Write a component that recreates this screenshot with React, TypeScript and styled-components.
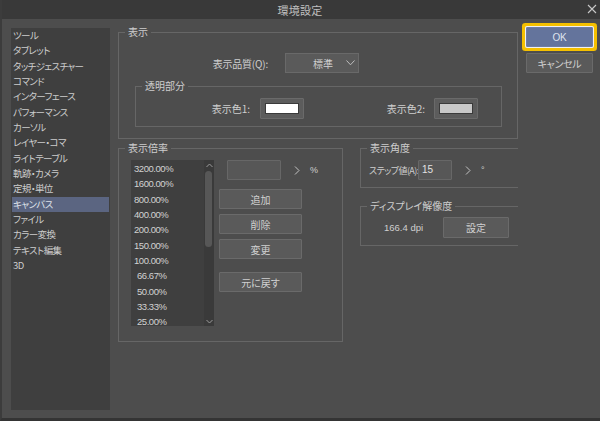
import styled, { createGlobalStyle } from 'styled-components';
import { useState } from 'react';

const GlobalStyle = createGlobalStyle`
	html, body {
		margin: 0;
		padding: 0;
		background: #4d4d4d;
	}
	* {
		box-sizing: border-box;
	}
	body {
		font-family: 'Noto Sans CJK JP', 'Noto Sans', sans-serif;
		font-feature-settings: 'palt';
		color: #cfcfcf;
	}
`;

const categories = [
	'ツール',
	'タブレット',
	'タッチジェスチャー',
	'コマンド',
	'インターフェース',
	'パフォーマンス',
	'カーソル',
	'レイヤー・コマ',
	'ライトテーブル',
	'軌跡・カメラ',
	'定規・単位',
	'キャンバス',
	'ファイル',
	'カラー変換',
	'テキスト編集',
	'3D',
];

const zoomRates = ['3200.00', '1600.00', '800.00', '400.00', '200.00', '150.00', '100.00', '66.67', '50.00', '33.33', '25.00'];

const App = () => {
	const [selected, setSelected] = useState('キャンバス');

	return (
		<>
			<GlobalStyle />
			<Window>
				<TitleBar>
					<Title>環境設定</Title>
					<CloseButton>
						<svg width="10" height="10" viewBox="0 0 10 10">
							<path d="M1 1 L9 9 M9 1 L1 9" stroke="#c8c8c8" strokeWidth="1.1" fill="none" />
						</svg>
					</CloseButton>
				</TitleBar>
				<Body>
					<Sidebar>
						{categories.map((name) => (
							<SidebarItem key={name} $active={name === selected} onClick={() => setSelected(name)}>
								{name}
							</SidebarItem>
						))}
					</Sidebar>

					<Content>
						<Group>
							<Legend>表示</Legend>
							<DisplayInner>
								<QualityRow>
									<QualityLabel>表示品質(Q):</QualityLabel>
									<Select>
										<span>標準</span>
										<svg width="9" height="6" viewBox="0 0 9 6">
											<path d="M0.5 0.5 L4.5 4.8 L8.5 0.5" stroke="#bdbdbd" strokeWidth="1" fill="none" />
										</svg>
									</Select>
								</QualityRow>
								<SubGroup>
									<Legend>透明部分</Legend>
									<SwatchRow>
										<FieldLabel $width={114}>表示色1:</FieldLabel>
										<Swatch $gap={10}>
											<SwatchColor $color="#ffffff" />
										</Swatch>
										<FieldLabel $width={121}>表示色2:</FieldLabel>
										<Swatch $gap={9}>
											<SwatchColor $color="#c8c8c8" />
										</Swatch>
									</SwatchRow>
								</SubGroup>
							</DisplayInner>
						</Group>

						<LowerRow>
							<ZoomGroup>
								<Legend>表示倍率</Legend>
								<ZoomInner>
									<ZoomList>
										<ZoomItems>
											{zoomRates.map((rate) => (
												<ZoomItem key={rate} $indent={parseFloat(rate) < 100}>
													{rate}%
												</ZoomItem>
											))}
										</ZoomItems>
										<ScrollBar>
											<ScrollArrow>
												<svg width="7" height="5" viewBox="0 0 7 5">
													<path d="M0.5 4 L3.5 1 L6.5 4" stroke="#9a9a9a" strokeWidth="1" fill="none" />
												</svg>
											</ScrollArrow>
											<ScrollTrack>
												<ScrollThumb />
											</ScrollTrack>
											<ScrollArrow>
												<svg width="7" height="5" viewBox="0 0 7 5">
													<path d="M0.5 1 L3.5 4 L6.5 1" stroke="#9a9a9a" strokeWidth="1" fill="none" />
												</svg>
											</ScrollArrow>
										</ScrollBar>
									</ZoomList>
									<ZoomControls>
										<InputRow>
											<TextInput $width={54} />
											<Spin>
												<svg width="6" height="9" viewBox="0 0 6 9">
													<path d="M1 0.5 L5 4.5 L1 8.5" stroke="#c4c4c4" strokeWidth="1" fill="none" />
												</svg>
											</Spin>
											<Unit>%</Unit>
										</InputRow>
										<ActionButton $top={9}>追加</ActionButton>
										<ActionButton $top={5}>削除</ActionButton>
										<ActionButton $top={5}>変更</ActionButton>
										<ActionButton $top={13}>元に戻す</ActionButton>
									</ZoomControls>
								</ZoomInner>
							</ZoomGroup>

							<RightColumn>
								<SideGroup>
									<Legend>表示角度</Legend>
									<SideInner>
										<InputRow>
											<StepLabel>ステップ値(A):</StepLabel>
											<TextInput $width={34}>15</TextInput>
											<Spin>
												<svg width="6" height="9" viewBox="0 0 6 9">
													<path d="M1 0.5 L5 4.5 L1 8.5" stroke="#c4c4c4" strokeWidth="1" fill="none" />
												</svg>
											</Spin>
											<Unit>°</Unit>
										</InputRow>
									</SideInner>
								</SideGroup>
								<SideGroup $top={12}>
									<Legend>ディスプレイ解像度</Legend>
									<ResolutionInner>
										<DpiText>166.4 dpi</DpiText>
										<SettingButton>設定</SettingButton>
									</ResolutionInner>
								</SideGroup>
							</RightColumn>
						</LowerRow>
					</Content>

					<DialogButtons>
						<OkButton>OK</OkButton>
						<DialogButton>キャンセル</DialogButton>
					</DialogButtons>
				</Body>
			</Window>
		</>
	);
};

export default App;

const Window = styled.div`
	width: 600px;
	height: 421px;
	display: flex;
	flex-direction: column;
	background: #4d4d4d;
	border-left: 2px solid #3c3c3c;
	border-bottom: 3px solid #343434;
	overflow: hidden;
`;

const TitleBar = styled.div`
	height: 19px;
	flex-shrink: 0;
	display: flex;
	align-items: center;
	justify-content: center;
	position: relative;
	background: #393939;
	margin-left: -2px;
`;

const Title = styled.div`
	font-size: 11px;
	color: #c0c0c0;
	letter-spacing: 0.3px;
`;

const CloseButton = styled.div`
	position: absolute;
	right: 3px;
	top: 4px;
	width: 10px;
	height: 10px;
	display: flex;
`;

const Body = styled.div`
	flex: 1;
	display: flex;
	align-items: flex-start;
	padding: 7px 0 0 9px;
`;

const Sidebar = styled.div`
	width: 99px;
	height: 382px;
	margin-top: 2px;
	padding: 0 1px;
	background: #3f3f3f;
	flex-shrink: 0;
`;

const SidebarItem = styled.div<{ $active: boolean }>`
	height: 15.33px;
	line-height: 15.33px;
	padding-left: 1px;
	font-size: 9.5px;
	letter-spacing: -0.6px;
	white-space: nowrap;
	color: ${(p) => (p.$active ? '#dfe2e9' : '#cdcdcd')};
	background: ${(p) => (p.$active ? '#5b6581' : 'transparent')};
	cursor: default;
`;

const Content = styled.div`
	width: 400px;
	margin-left: 8px;
	flex-shrink: 0;
`;

const Group = styled.fieldset`
	margin: 0;
	padding: 0;
	min-width: 0;
	border: 1px solid #666666;
`;

const Legend = styled.legend`
	margin-left: 6px;
	padding: 0 3px;
	font-size: 10px;
	line-height: 12px;
	color: #cdcdcd;
`;

const DisplayInner = styled.div`
	padding: 15px 15px 11px 16px;
`;

const QualityRow = styled.div`
	display: flex;
	align-items: center;
	height: 20px;
`;

const QualityLabel = styled.div`
	width: 133px;
	text-align: right;
	font-size: 10px;
	letter-spacing: -0.2px;
`;

const Select = styled.div`
	width: 74px;
	height: 20px;
	margin-left: 17px;
	display: flex;
	align-items: center;
	justify-content: space-between;
	padding: 0 3px 0 27px;
	background: #5a5a5a;
	border: 1px solid #696969;
	font-size: 10px;
	color: #d0d0d0;
`;

const SubGroup = styled.fieldset`
	margin: 7px 0 0;
	padding: 0;
	min-width: 0;
	border: 1px solid #666666;
`;

const SwatchRow = styled.div`
	display: flex;
	align-items: center;
	padding: 6px 0 7px;
`;

const FieldLabel = styled.div<{ $width: number }>`
	width: ${(p) => p.$width}px;
	text-align: right;
	font-size: 10px;
`;

const Swatch = styled.div<{ $gap: number }>`
	width: 44px;
	height: 21px;
	margin-left: ${(p) => p.$gap}px;
	padding: 4px;
	background: #5c5c5c;
	border: 1px solid #6a6a6a;
	border-radius: 1px;
`;

const SwatchColor = styled.div<{ $color: string }>`
	width: 100%;
	height: 100%;
	background: ${(p) => p.$color};
	border: 1px solid #3a3a3a;
`;

const LowerRow = styled.div`
	display: flex;
	align-items: flex-start;
	margin-top: 3px;
`;

const ZoomGroup = styled(Group)`
	width: 225px;
	flex-shrink: 0;
`;

const ZoomInner = styled.div`
	display: flex;
	align-items: flex-start;
	padding: 6px 0 15px 12px;
`;

const ZoomList = styled.div`
	width: 83px;
	height: 166px;
	display: flex;
	background: #3f3f3f;
	flex-shrink: 0;
`;

const ZoomItems = styled.div`
	flex: 1;
	padding-top: 1px;
`;

const ZoomItem = styled.div<{ $indent: boolean }>`
	height: 15.33px;
	line-height: 15.33px;
	padding-left: ${(p) => (p.$indent ? 6 : 3)}px;
	font-family: 'Liberation Sans', 'Noto Sans', sans-serif;
	font-size: 9.5px;
	letter-spacing: -0.45px;
	color: #d2d2d2;
`;

const ScrollBar = styled.div`
	width: 10px;
	display: flex;
	flex-direction: column;
	background: #3a3a3a;
`;

const ScrollArrow = styled.div`
	height: 10px;
	display: flex;
	align-items: center;
	justify-content: center;
`;

const ScrollTrack = styled.div`
	flex: 1;
	padding: 1px 2px 0 1px;
`;

const ScrollThumb = styled.div`
	height: 76px;
	border-radius: 4px;
	background: #575757;
`;

const ZoomControls = styled.div`
	margin-left: 5px;
	display: flex;
	flex-direction: column;
`;

const InputRow = styled.div`
	display: flex;
	align-items: center;
	height: 20px;
`;

const TextInput = styled.div<{ $width: number }>`
	width: ${(p) => p.$width}px;
	height: 20px;
	margin-left: ${(p) => (p.$width > 40 ? 8 : 0)}px;
	padding-left: 3px;
	line-height: 18px;
	font-family: 'Liberation Sans', sans-serif;
	font-size: 10px;
	color: #e2e2e2;
	background: #575757;
	border: 1px solid #676767;
	border-radius: 1px;
	flex-shrink: 0;
`;

const Spin = styled.div`
	margin-left: 13px;
	display: flex;
`;

const Unit = styled.div`
	margin-left: 10px;
	font-family: 'Liberation Sans', sans-serif;
	font-size: 9px;
	color: #cfcfcf;
`;

const BaseButton = styled.div`
	display: flex;
	align-items: center;
	justify-content: center;
	height: 21px;
	font-size: 10px;
	color: #d0d0d0;
	background: #5a5a5a;
	border: 1px solid #6a6a6a;
	border-radius: 1px;
	cursor: default;
`;

const ActionButton = styled(BaseButton)<{ $top: number }>`
	width: 83px;
	height: 20px;
	margin-top: ${(p) => p.$top}px;
`;

const RightColumn = styled.div`
	width: 158px;
	margin-left: 17px;
	flex-shrink: 0;
`;

const SideGroup = styled(Group)<{ $top?: number }>`
	margin-top: ${(p) => p.$top ?? 0}px;
	border-right: none;
`;

const SideInner = styled.div`
	padding: 6px 0 7px 8px;
`;

const StepLabel = styled.div`
	width: 49px;
	font-size: 9px;
	white-space: nowrap;
	letter-spacing: -0.55px;
`;

const ResolutionInner = styled.div`
	display: flex;
	align-items: center;
	padding: 5px 0 7px 23px;
`;

const DpiText = styled.div`
	width: 59px;
	font-family: 'Liberation Sans', sans-serif;
	font-size: 9.5px;
	color: #cfcfcf;
`;

const SettingButton = styled(BaseButton)`
	width: 66px;
`;

const DialogButtons = styled.div`
	width: 67px;
	margin-left: 8px;
	margin-top: 1px;
	display: flex;
	flex-direction: column;
	gap: 6px;
`;

const DialogButton = styled(BaseButton)`
	height: 20px;
	letter-spacing: -0.3px;
`;

const OkButton = styled(DialogButton)`
	background: #64749c;
	border-color: #6e7da3;
	color: #dfe3ec;
	font-family: 'Liberation Sans', sans-serif;
	box-shadow: 0 0 0 1px #f0f0f0, 0 0 0 4px #f5c000;
`;
